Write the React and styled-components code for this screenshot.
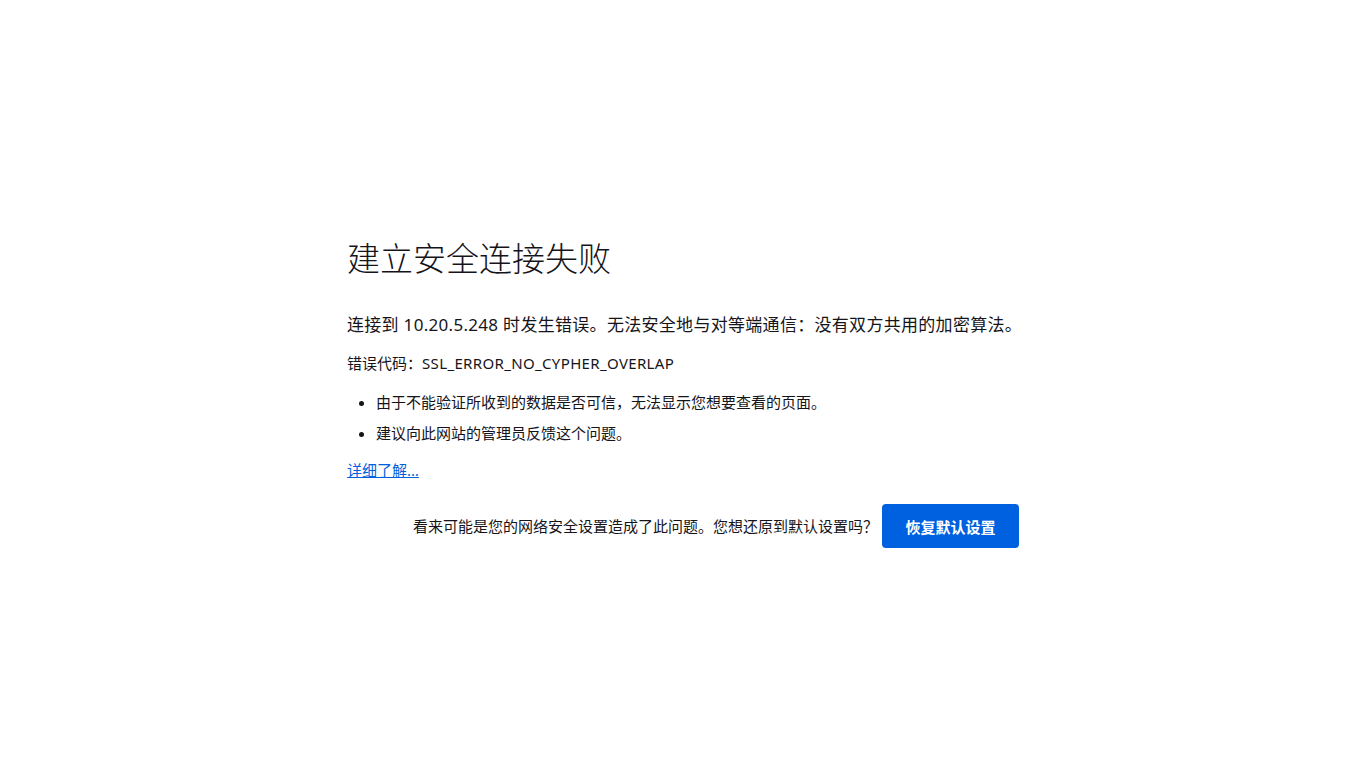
import React from "react";
import styled, { createGlobalStyle } from "styled-components";

const Global = createGlobalStyle`
  html, body { margin: 0; padding: 0; background: #ffffff; }
  body {
    font-family: "Noto Sans", "Noto Sans CJK SC", sans-serif;
    color: #15141a;
  }
`;

const Page = styled.div`
  min-height: 768px;
  display: flex;
  justify-content: center;
  padding-top: 239px;
  box-sizing: border-box;
`;

const Container = styled.div`
  width: 672px;
`;

const Title = styled.h1`
  margin: 0;
  font-size: 33px;
  line-height: 40px;
  font-weight: 300;
`;

const Lead = styled.p`
  margin: 33px 0 0;
  font-size: 17px;
  line-height: 26px;
  letter-spacing: 0.3px;
  white-space: nowrap;
`;

const Code = styled.p`
  margin: 14px 0 0;
  font-size: 15px;
  line-height: 22px;
`;

const CodeValue = styled.span`
  letter-spacing: 0.35px;
`;

const List = styled.ul`
  margin: 17px 0 0;
  padding-left: 29px;
  font-size: 15px;
  line-height: 22px;
`;

const Item = styled.li`
  & + & { margin-top: 9px; }
`;

const Link = styled.a`
  display: inline-block;
  margin-top: 15px;
  font-size: 15px;
  line-height: 22px;
  color: #0061e0;
  text-decoration: underline;
  cursor: pointer;
`;

const Row = styled.div`
  margin-top: 23px;
  display: flex;
  align-items: center;
  justify-content: flex-end;
  gap: 4px;
`;

const Prompt = styled.span`
  font-size: 15px;
  line-height: 22px;
`;

const Button = styled.button`
  height: 44px;
  width: 137px;
  border: none;
  border-radius: 4px;
  background: #0061e0;
  color: #ffffff;
  font-family: inherit;
  font-size: 15px;
  font-weight: 700;
  cursor: pointer;
`;

export default function App() {
  return (
    <>
      <Global />
      <Page>
        <Container>
          <Title>建立安全连接失败</Title>
          <Lead>连接到 10.20.5.248 时发生错误。无法安全地与对等端通信：没有双方共用的加密算法。</Lead>
          <Code>
            错误代码：<CodeValue>SSL_ERROR_NO_CYPHER_OVERLAP</CodeValue>
          </Code>
          <List>
            <Item>由于不能验证所收到的数据是否可信，无法显示您想要查看的页面。</Item>
            <Item>建议向此网站的管理员反馈这个问题。</Item>
          </List>
          <Link>详细了解…</Link>
          <Row>
            <Prompt>看来可能是您的网络安全设置造成了此问题。您想还原到默认设置吗？</Prompt>
            <Button>恢复默认设置</Button>
          </Row>
        </Container>
      </Page>
    </>
  );
}
